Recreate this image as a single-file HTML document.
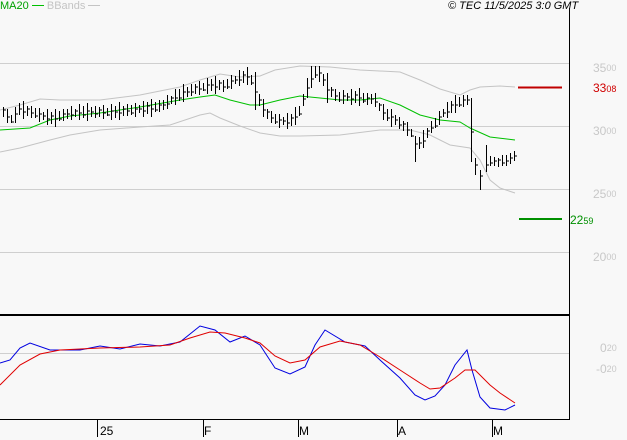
<!DOCTYPE html>
<html><head><meta charset="utf-8"><style>
html,body{margin:0;padding:0;background:#f8f8f8;}
body{width:627px;height:440px;overflow:hidden;position:relative;font-family:"Liberation Sans",sans-serif;}
.t{position:absolute;font-size:11px;line-height:12px;white-space:nowrap;}
.ax{color:#c8c8c8;font-size:12px;}
.ax small{font-size:9px;vertical-align:1px;}
</style></head><body>
<svg width="627" height="440" style="position:absolute;left:0;top:0">
<g stroke="#cfcfcf" stroke-width="1">
<line x1="0" y1="63.5" x2="569" y2="63.5"/><line x1="0" y1="126.5" x2="569" y2="126.5"/>
<line x1="0" y1="189.5" x2="569" y2="189.5"/><line x1="0" y1="252.5" x2="569" y2="252.5"/>
<line x1="0" y1="353.5" x2="569" y2="353.5"/>
</g>
<line x1="569.5" y1="8" x2="569.5" y2="420" stroke="#000"/>
<line x1="0" y1="315" x2="570" y2="315" stroke="#000" stroke-width="2"/>
<line x1="0" y1="419.5" x2="570" y2="419.5" stroke="#000"/>
<g stroke="#000"><line x1="97.5" y1="419" x2="97.5" y2="437"/><line x1="203.5" y1="419" x2="203.5" y2="437"/><line x1="298.5" y1="419" x2="298.5" y2="437"/><line x1="397.5" y1="419" x2="397.5" y2="437"/><line x1="492.5" y1="419" x2="492.5" y2="437"/></g>
<polyline fill="none" stroke="#c4c4c4" points="0,110 20,105 40,99 60,100 100,100 140,95 180,87 200,80 220,74 240,77 260,76 275,70 300,66 330,67 360,70 400,72 420,80 440,89 460,95 470,90 480,87 500,86 515,87"/>
<polyline fill="none" stroke="#c4c4c4" points="0,152 20,148 50,140 70,135 100,130 140,127 170,125 200,115 210,113 220,118 240,126 260,133 280,136 300,136 340,135 380,130 410,130 430,135 450,145 470,148 480,160 490,180 500,188 515,193"/>
<polyline fill="none" stroke="#00c000" points="0,130 30,128 50,120 70,116 100,113 140,107 180,100 200,97 215,95 230,100 250,105 260,105 280,100 300,96 320,98 340,100 360,100 380,98 400,105 420,115 440,120 460,122 470,128 490,137 515,140"/>
<path fill="none" stroke="#000" stroke-width="1" d="M3.5 107V117M3 110H6M7.5 109V123M7 117H10M11.5 115V123M11 122H14M15.5 107V123M15 114H18M19.5 103V115M19 109H22M23.5 101V119M23 112H26M27.5 106V116M27 109H30M31.5 106V118M31 113H34M35.5 108V118M35 116H38M39.5 108V122M39 114H42M43.5 112V120M43 116H46M47.5 109V125M47 119H50M51.5 112V124M51 116H54M55.5 109V127M55 119H58M59.5 111V121M59 119H62M63.5 109V121M63 114H66M67.5 109V119M67 114H70M71.5 106V120M71 115H74M75.5 109V117M75 111H78M79.5 104V120M79 113H82M83.5 106V118M83 115H86M87.5 103V121M87 111H90M91.5 107V117M91 112H94M95.5 106V118M95 114H98M99.5 107V117M99 110H102M103.5 105V119M103 113H106M107.5 108V116M107 115H110M111.5 104V120M111 111H114M115.5 106V118M115 112H118M119.5 102V120M119 113H122M123.5 106V116M123 109H126M127.5 104V116M127 111H130M131.5 105V115M131 113H134M135.5 103V117M135 109H138M139.5 105V113M139 109H142M143.5 101V117M143 111H146M147.5 102V114M147 106H150M151.5 99V117M151 109H154M155.5 102V112M155 110H158M159.5 100V112M159 105H162M163.5 100V110M163 105H166M167.5 95V109M167 104H170M171.5 96V104M171 98H174M175.5 89V105M175 98H178M179.5 89V101M179 98H182M183.5 84V102M183 92H186M187.5 87V97M187 92H190M191.5 84V96M191 92H194M195.5 84V94M195 87H198M199.5 81V95M199 89H202M203.5 83V91M203 90H206M207.5 78V94M207 85H210M211.5 79V91M211 85H214M215.5 76V94M215 87H218M219.5 80V90M219 83H222M223.5 80V92M223 87H226M227.5 79V89M227 87H230M231.5 75V89M231 81H234M235.5 76V84M235 80H238M239.5 70V86M239 80H242M243.5 71V83M243 75H246M247.5 67V85M247 77H250M251.5 75V85M251 83H254M255.5 72V110M255 92H258M259.5 94V106M259 100H262M263.5 99V117M263 110H266M267.5 109V119M267 112H270M271.5 111V123M271 118H274M275.5 114V124M275 122H278M279.5 114V128M279 120H282M283.5 117V125M283 121H286M287.5 113V129M287 123H290M291.5 114V126M291 118H294M295.5 107V125M295 117H298M299.5 106V116M299 114H302M303.5 94V106M303 99H306M307.5 78V98M307 88H310M311.5 66V88M311 79H314M315.5 66V78M315 75H318M319.5 66V82M319 73H322M323.5 74V86M323 80H326M327.5 73V103M327 90H330M331.5 87V97M331 90H334M335.5 89V101M335 96H338M339.5 92V102M339 100H342M343.5 90V104M343 96H346M347.5 93V101M347 97H350M351.5 89V105M351 99H354M355.5 91V103M355 95H358M359.5 88V106M359 98H362M363.5 93V103M363 101H366M367.5 93V105M367 98H370M371.5 94V104M371 99H374M375.5 93V107M375 102H378M379.5 103V111M379 105H382M383.5 104V120M383 113H386M387.5 109V121M387 118H390M391.5 109V127M391 117H394M395.5 115V125M395 120H398M399.5 117V129M399 125H402M403.5 121V131M403 124H406M407.5 122V136M407 130H410M411.5 129V137M411 136H414M415.5 136V162M415 144H418M419.5 137V149M419 143H422M423.5 130V148M423 141H426M427.5 128V138M427 131H430M431.5 121V133M431 128H434M435.5 118V128M435 126H438M439.5 111V125M439 117H442M443.5 109V117M443 113H446M447.5 102V118M447 112H450M451.5 101V113M451 105H454M455.5 95V113M455 105H458M459.5 97V107M459 105H462M463.5 95V107M463 100H466M467.5 95V105M467 100H470M471.5 98V162M471 132H474M475.5 158V175M475 165H478M480.5 170V190M480 176H483M486.5 145V172M486 165H489M490.5 156V166M490 163H493M494.5 157V166M494 161H497M498.5 158V167M498 160H501M502.5 155V166M502 163H505M506.5 155V166M506 161H509M510.5 153V164M510 158H513M514.5 151V161M514 156H517"/>
<line x1="518" y1="87.5" x2="562" y2="87.5" stroke="#c00000" stroke-width="2"/>
<line x1="519" y1="219" x2="562" y2="219" stroke="#009000" stroke-width="2"/>
<polyline fill="none" stroke="#0000e0" points="0,363 10,360 20,348 30,343 50,350 80,350 100,346 120,349 140,344 160,346 180,342 200,326 215,330 230,342 245,336 260,345 275,368 290,374 305,367 315,345 325,330 345,342 365,346 380,360 400,378 415,395 425,400 435,396 445,385 455,365 467,350 472,370 480,397 490,408 505,410 515,405"/>
<polyline fill="none" stroke="#e00000" points="0,385 20,365 40,354 60,350 100,348 140,347 170,345 190,338 210,332 225,333 245,338 260,343 275,356 290,363 305,360 320,347 340,341 360,345 380,357 400,370 420,383 430,389 440,388 455,378 465,370 475,370 490,385 500,393 515,403"/>
</svg>
<div class="t" style="left:0;top:0;color:#00a000">MA20 <span style="display:inline-block;width:12px;border-top:1px solid #00c000;vertical-align:3px"></span> <span style="color:#c4c4c4">BBands <span style="display:inline-block;width:12px;border-top:1px solid #c4c4c4;vertical-align:3px"></span></span></div>
<div class="t" style="left:448px;top:0;font-style:italic;color:#000">© TEC 11/5/2025 3:0 GMT</div>
<div class="t ax" style="left:593px;top:62px">35<small>00</small></div>
<div class="t" style="left:593px;top:82px;color:#d00000;font-size:12px">33<small style="font-size:9px">08</small></div>
<div class="t ax" style="left:593px;top:125px">30<small>00</small></div>
<div class="t ax" style="left:593px;top:188px">25<small>00</small></div>
<div class="t" style="left:570px;top:214px;color:#009000;font-size:12px">22<small style="font-size:9px">59</small></div>
<div class="t ax" style="left:593px;top:251px">20<small>00</small></div>
<div class="t ax" style="left:600px;top:342px">0<small>20</small></div>
<div class="t ax" style="left:596px;top:363px">-0<small>20</small></div>
<div class="t" style="left:100px;top:425px;font-size:12px">25</div>
<div class="t" style="left:204px;top:425px;font-size:12px">F</div>
<div class="t" style="left:299px;top:425px;font-size:12px">M</div>
<div class="t" style="left:398px;top:425px;font-size:12px">A</div>
<div class="t" style="left:493px;top:425px;font-size:12px">M</div>
</body></html>
